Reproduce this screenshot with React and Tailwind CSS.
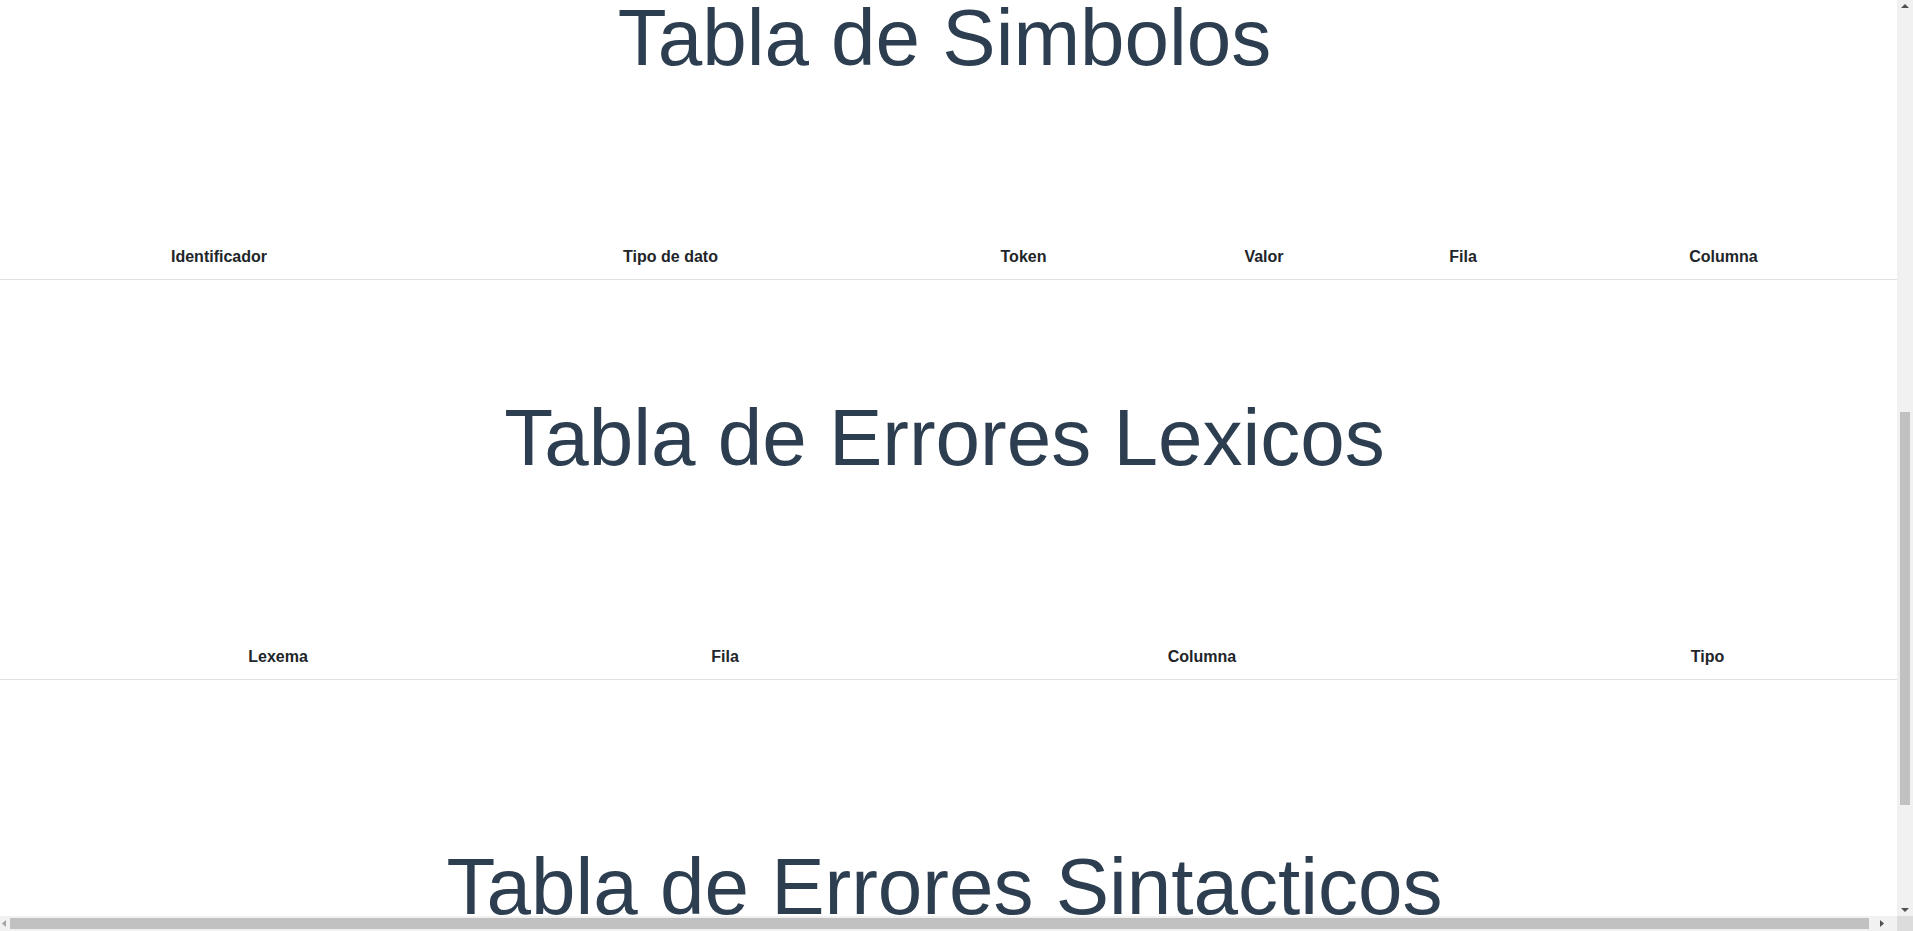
import React, { useEffect } from 'react';

const tables = [
  {
    title: 'Tabla de Simbolos',
    cols: [
      ['Identificador', 'w-[438px]'],
      ['Tipo de dato', 'w-[465px]'],
      ['Token', 'w-[241px]'],
      ['Valor', 'w-[240px]'],
      ['Fila', 'w-[158px]'],
      ['Columna', 'w-[363px]'],
    ],
  },
  {
    title: 'Tabla de Errores Lexicos',
    cols: [
      ['Lexema', 'w-[556px]'],
      ['Fila', 'w-[338px]'],
      ['Columna', 'w-[616px]'],
      ['Tipo', 'w-[395px]'],
    ],
  },
  {
    title: 'Tabla de Errores Sintacticos',
    cols: [
      ['Lexema', 'w-[556px]'],
      ['Fila', 'w-[338px]'],
      ['Columna', 'w-[616px]'],
      ['Descripcion', 'w-[395px]'],
    ],
  },
];

const Reporte = ({ title, cols }) => (
  <section>
    <h1 className="pr-6 text-[80px] leading-none font-normal text-[#2c3e50]">{title}</h1>
    <table className="mt-[157px] w-[1905px] table-fixed border-collapse">
      <thead>
        <tr className="border-b border-[#dee2e6]">
          {cols.map(([c, w]) => (
            <th key={c} className={`${w} px-3 py-2.5 text-base font-bold text-[#212529]`}>
              {c}
            </th>
          ))}
        </tr>
      </thead>
      <tbody></tbody>
    </table>
  </section>
);

// barras de desplazamiento del navegador, como en la captura
const Scrollbars = () => (
  <>
    <div className="fixed top-0 right-0 w-4 h-[916px] bg-[#f1f1f1] flex flex-col items-center">
      <svg width="16" height="14" viewBox="0 0 16 14" className="shrink-0">
        <polygon points="4,8 12,8 8,4" fill="#505050" />
      </svg>
      <div className="flex-1 w-full px-[3px]">
        <div className="mt-[398px] h-[393px] bg-[#c1c1c1]" />
      </div>
      <svg width="16" height="14" viewBox="0 0 16 14" className="shrink-0">
        <polygon points="4,6 12,6 8,10" fill="#505050" />
      </svg>
    </div>
    <div className="fixed bottom-0 left-0 w-[1897px] h-[15px] bg-[#f1f1f1] flex items-center">
      <svg width="10" height="15" viewBox="0 0 10 15" className="shrink-0">
        <polygon points="6,4 6,11 2,7.5" fill="#a3a3a3" />
      </svg>
      <div className="flex-1 h-[11px] bg-[#c1c1c1]" />
      <svg width="28" height="15" viewBox="0 0 28 15" className="shrink-0">
        <polygon points="11,4 11,11 15,7.5" fill="#505050" />
      </svg>
    </div>
    <div className="fixed bottom-0 right-0 w-4 h-[15px] bg-[#dcdcdc]" />
  </>
);

export default function App() {
  // la vista esta desplazada hasta las tablas
  useEffect(() => {
    window.scrollTo(0, 927);
  }, []);

  return (
    <div className="text-center font-['Liberation_Sans',Arial,sans-serif] text-[#2c3e50]">
      {/* editor (fuera de la vista) */}
      <div className="h-[925px] flex flex-col items-center gap-4 pt-10">
        <h1 className="text-4xl">Analizador</h1>
        <textarea className="w-[900px] h-[600px] border border-gray-300" readOnly />
      </div>

      <Reporte {...tables[0]} />
      <div className="h-[118px]" />
      <Reporte {...tables[1]} />
      <div className="h-[167px]" />
      <Reporte {...tables[2]} />
      <div className="h-8" />
      <Scrollbars />
    </div>
  );
}
